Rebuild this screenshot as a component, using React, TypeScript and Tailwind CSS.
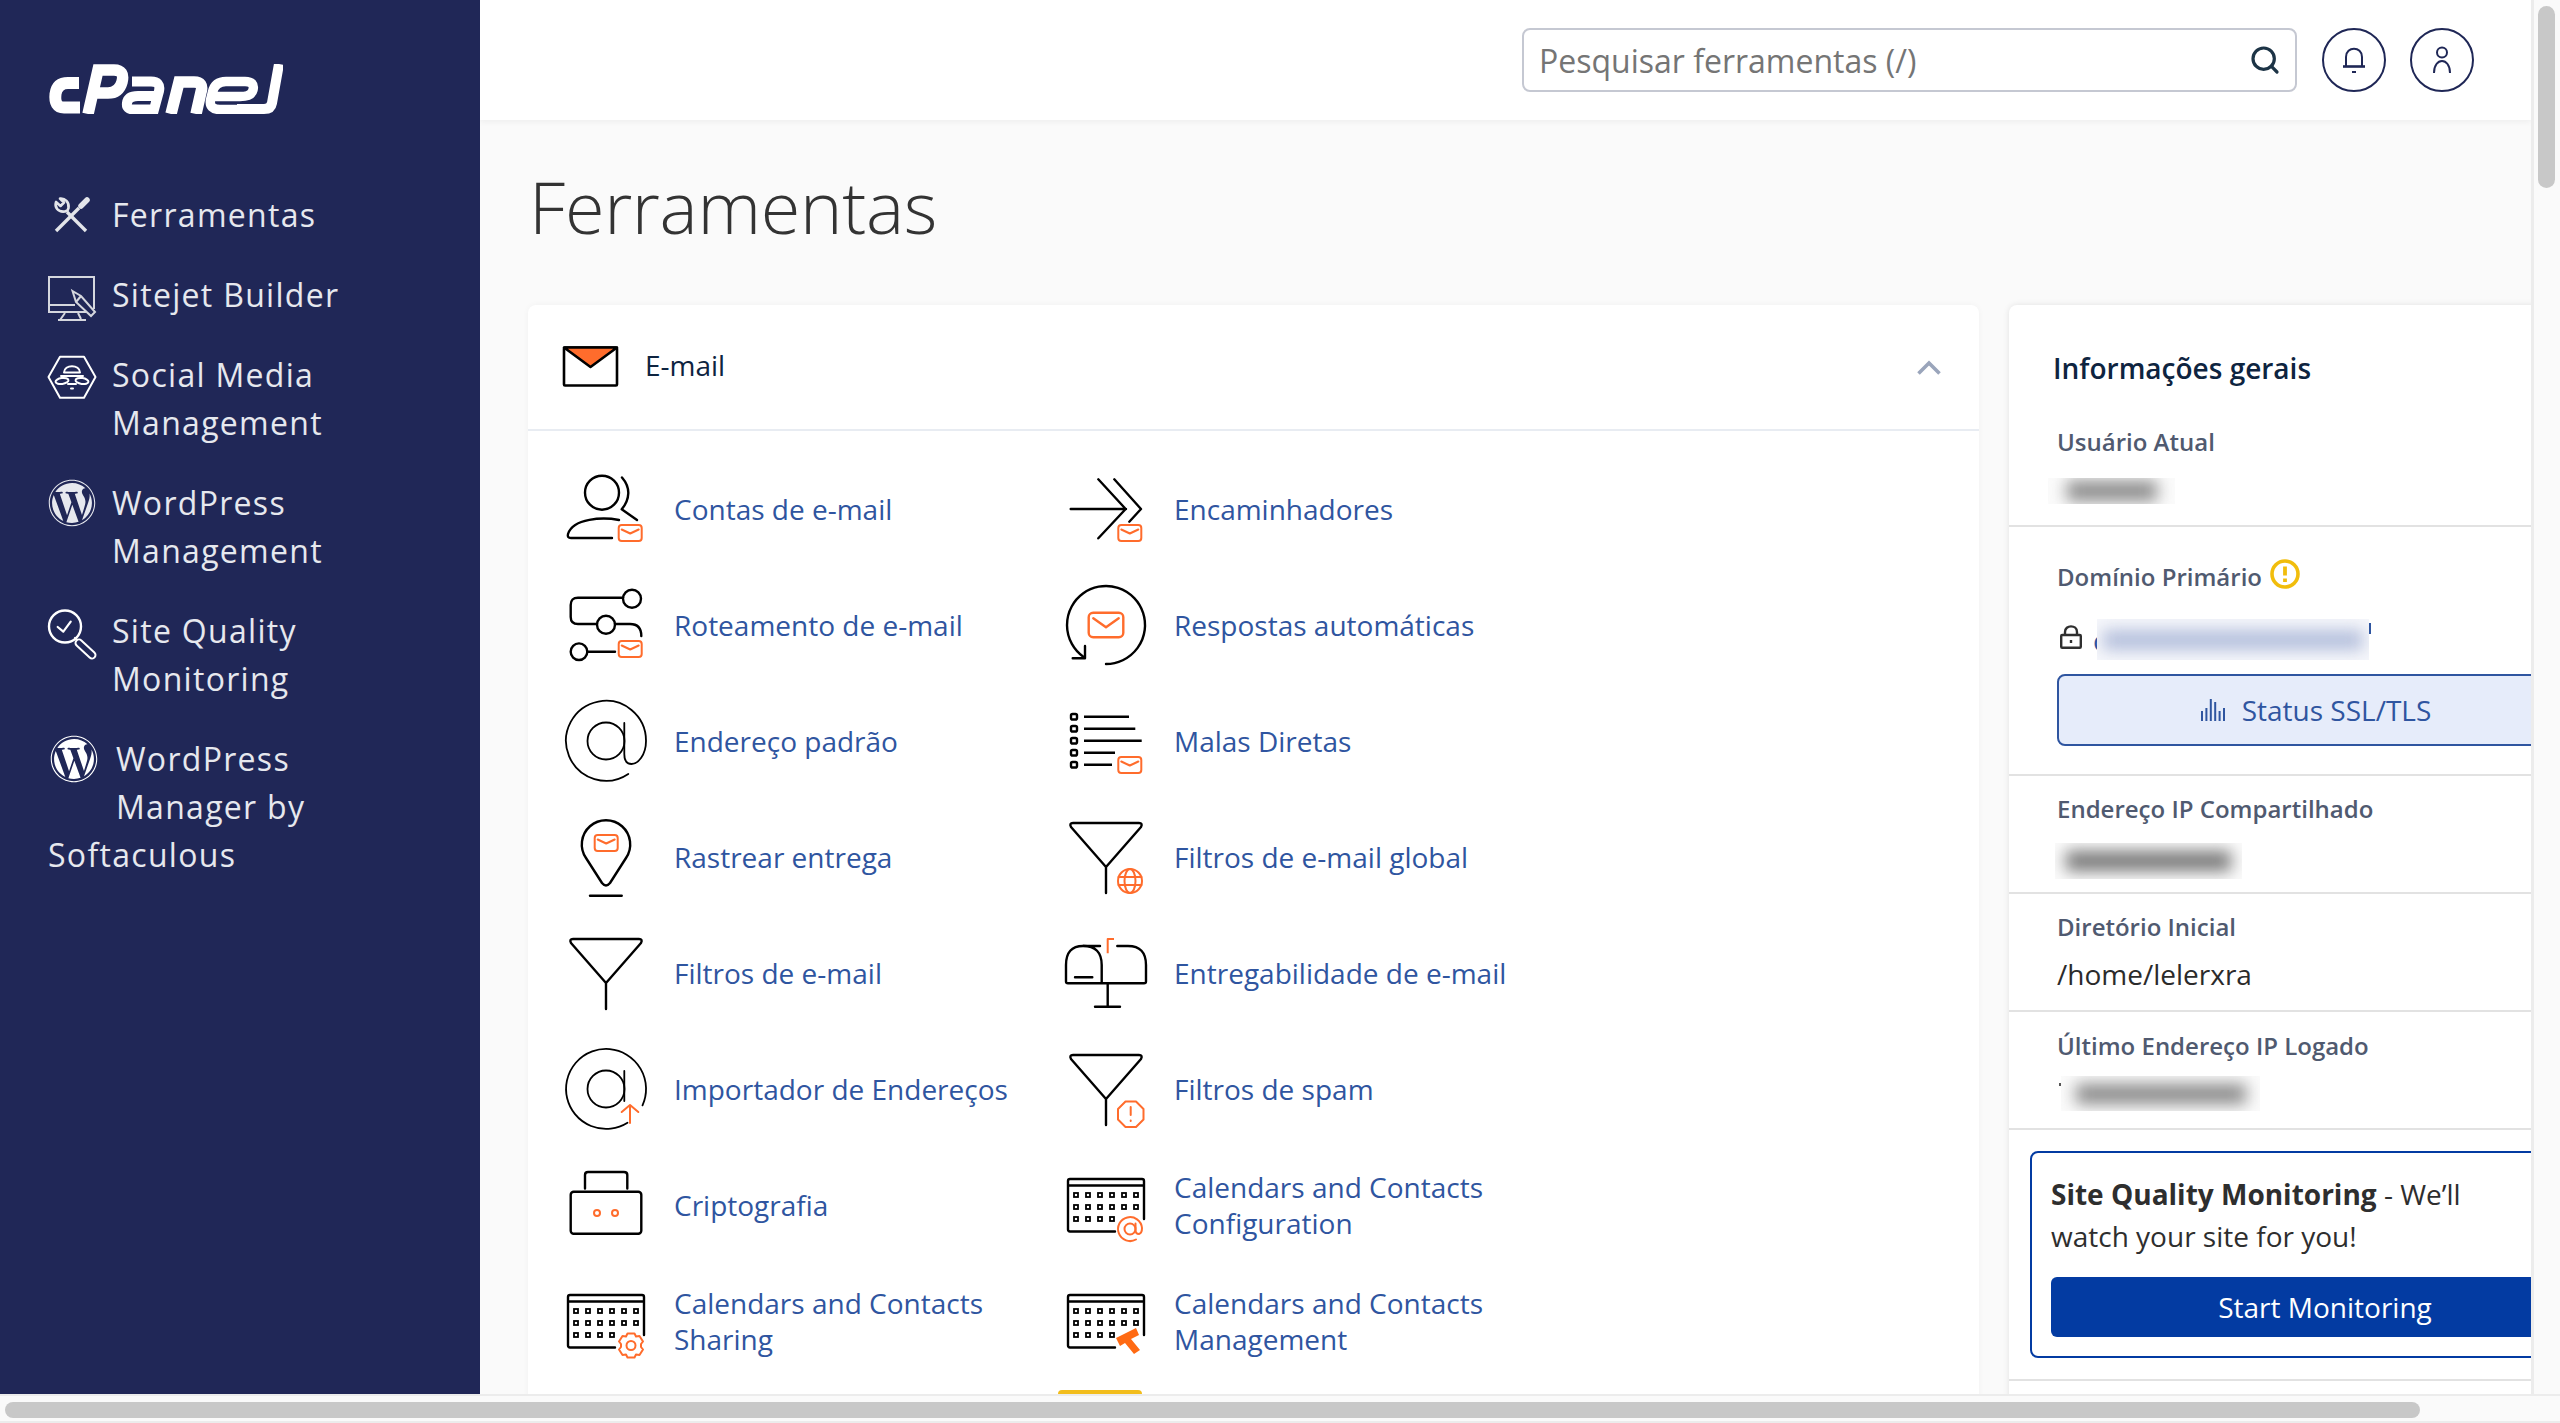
import React from "react";
import { Search } from "lucide-react";
import { FaWordpress } from "react-icons/fa";

const ORANGE = "#ff6c2c";

const Mail = ({ x, y }: { x: number; y: number }) => (
  <g fill="none" stroke={ORANGE} strokeWidth="2">
    <rect x={x} y={y} width="23" height="16" rx="3" />
    <path d={`M${x + 3} ${y + 4.5}L${x + 11.5} ${y + 8.5}L${x + 20} ${y + 4.5}`} />
  </g>
);

const Ic = ({ children }: { children: React.ReactNode }) => (
  <svg
    viewBox="0 0 76 76"
    className="w-[76px] h-[76px] shrink-0 overflow-visible"
    fill="none"
    stroke="#000"
    strokeWidth="2.4"
    strokeLinecap="round"
    strokeLinejoin="round"
  >
    {children}
  </svg>
);

const funnel = "M5 4H71Q75 4 73 8L38 48L3 8Q1 4 5 4ZM38 48V74";

const CalendarBody = () => {
  const dots: React.ReactNode[] = [];
  [28, 40, 52].forEach((y, r) =>
    [8, 20, 32, 44, 56, 68].forEach((x, c) => {
      if (r === 2 && c > 3) return;
      dots.push(<rect key={`${x}-${y}`} x={x - 2} y={y - 2} width="4" height="4" strokeWidth="1.8" strokeLinecap="butt" strokeLinejoin="miter" />);
    })
  );
  return (
    <>
      <path d="M47 64.5H2Q0 64.5 0 62.5V14Q0 12 2 12H74Q76 12 76 14V52M0 18.5H76" />
      {dots}
    </>
  );
};

const emailIcons: Record<string, React.ReactNode> = {
  contas: (
    <Ic>
      <circle cx="34" cy="21.7" r="17" />
      <path d="M54 6.5Q60.5 14 60.3 22.3Q60 31 53.7 38.3L69 49" />
      <path d="M51 49C35 46 5 47 0 63Q-1 67 3 67H44" />
      <Mail x={50.7} y={54} />
    </Ic>
  ),
  roteamento: (
    <Ic>
      <circle cx="64" cy="11.7" r="9" />
      <path d="M55 10.7H10Q2.7 10.7 2.7 18V30Q2.7 37 10 37H29" />
      <circle cx="38" cy="37.7" r="9" />
      <path d="M47 37H62Q73.3 37 73.3 49" />
      <circle cx="11" cy="64.7" r="8.3" />
      <path d="M19.3 64.7H47" />
      <Mail x={50.7} y={54} />
    </Ic>
  ),
  at: (
    <Ic>
      <g strokeWidth="1.8">
        <path d="M60.3 71A40 40 0 1 1 78 38C78 52 70 61 63.5 61C58 61 56.3 56 56.3 51V20" />
        <circle cx="38" cy="38" r="18.5" />
      </g>
    </Ic>
  ),
  rastrear: (
    <Ic>
      <path d="M34 64L18 39A24.2 24.2 0 1 1 58 39L42 64Q38 69 34 64Z" />
      <path d="M22 76.7H53.7" />
      <Mail x={26.7} y={16} />
    </Ic>
  ),
  filtro: (
    <Ic>
      <path d={funnel} />
    </Ic>
  ),
  importador: (
    <Ic>
      <g strokeWidth="1.8">
        <path d="M59.5 71.7A40 40 0 1 1 74.5 54.4" />
        <circle cx="38" cy="38" r="18.5" />
        <path d="M56.3 20V50" />
      </g>
      <path d="M62 72V54.5M53.7 61L62 54L70.3 61" stroke={ORANGE} strokeWidth="2" />
    </Ic>
  ),
  cripto: (
    <Ic>
      <rect x="2.7" y="24.7" width="70.6" height="42" rx="3" />
      <path d="M17 21.5V8Q17 5 20 5H56Q59.3 5 59.3 8V21.5" />
      <circle cx="29" cy="46" r="3" stroke={ORANGE} strokeWidth="2" />
      <circle cx="47" cy="46" r="3" stroke={ORANGE} strokeWidth="2" />
    </Ic>
  ),
  calSharing: (
    <Ic>
      <CalendarBody />
      <g stroke={ORANGE} strokeWidth="2">
        <circle cx="63" cy="62.5" r="4.5" />
        <path d="M59.5 50.5H66.5L68 53.5L71.5 53L75 58.5L73 61V64L75 66.5L71.5 72L68 71.5L66.5 74.5H59.5L58 71.5L54.5 72L51 66.5L53 64V61L51 58.5L54.5 53L58 53.5Z" />
      </g>
    </Ic>
  ),
  encaminhadores: (
    <Ic>
      <path d="M2.7 38H58M30.3 8.3L57.7 38L30.3 67.3M46.3 8.3L73 38L61.3 50.7" />
      <Mail x={50.3} y={54} />
    </Ic>
  ),
  respostas: (
    <Ic>
      <path d="M38 77A39 39 0 1 0 15.3 69.7" />
      <path d="M17 59V71.3H4.7" />
      <rect x="20.7" y="25.7" width="34.6" height="24.6" rx="4.5" stroke={ORANGE} strokeWidth="2.4" />
      <path d="M25.3 31.3L38 40.3L50.7 31.3" stroke={ORANGE} strokeWidth="2.4" />
    </Ic>
  ),
  malas: (
    <Ic>
      {[13.7, 25.7, 37.7, 49.7, 61.7].map((y) => (
        <rect key={y} x="3" y={y - 2.7} width="6" height="5.5" rx="1.6" />
      ))}
      <path d="M16 13.7H61M16 25.7H67.3M16 37.7H73.7M16 49.7H47M16 61.7H44" strokeLinecap="butt" />
      <Mail x={50.3} y={54} />
    </Ic>
  ),
  global: (
    <Ic>
      <path d={funnel} />
      <g stroke={ORANGE} strokeWidth="2">
        <circle cx="62" cy="62" r="12" />
        <ellipse cx="62" cy="62" rx="5.5" ry="12" />
        <path d="M50.5 58H73.5M50.5 66H73.5" />
      </g>
    </Ic>
  ),
  entrega: (
    <Ic>
      <path d="M33.7 48.3V30Q33.7 11 15 11Q-2 11 -2 30V46.5Q-2 48.3 0 48.3H76Q78 48.3 78 46.5V30Q78 11 60 11H49.3M15.3 11H32" />
      <path d="M7 42.3H24.3M39.7 49V71.7M27 71.7H52" />
      <path d="M39.7 18.3V4H46" stroke={ORANGE} strokeWidth="2" strokeLinecap="butt" />
    </Ic>
  ),
  spam: (
    <Ic>
      <path d={funnel} />
      <path d="M57.5 50.5H68L75.5 58V68.5L68 76H57.5L50 68.5V58Z" stroke={ORANGE} strokeWidth="2" />
      <path d="M62.7 56V64M62.7 69.5V70" stroke={ORANGE} strokeWidth="2" />
    </Ic>
  ),
  calConfig: (
    <Ic>
      <CalendarBody />
      <g stroke={ORANGE} strokeWidth="2">
        <circle cx="62" cy="62" r="5.5" />
        <path d="M67.5 56.5V63Q67.5 67 71 67Q74 66 74 61A12 12 0 1 0 68 72.5" />
      </g>
    </Ic>
  ),
  calMgmt: (
    <Ic>
      <CalendarBody />
      <path d="M48 55L68 45L71 52L63 56L72 67L66 71L57 60L52 63Z" fill="#ff6a13" stroke="none" />
    </Ic>
  ),
};

type Tool = { label: string; icon: string };

const tools: [Tool, Tool][] = [
  [{ label: "Contas de e-mail", icon: "contas" }, { label: "Encaminhadores", icon: "encaminhadores" }],
  [{ label: "Roteamento de e-mail", icon: "roteamento" }, { label: "Respostas automáticas", icon: "respostas" }],
  [{ label: "Endereço padrão", icon: "at" }, { label: "Malas Diretas", icon: "malas" }],
  [{ label: "Rastrear entrega", icon: "rastrear" }, { label: "Filtros de e-mail global", icon: "global" }],
  [{ label: "Filtros de e-mail", icon: "filtro" }, { label: "Entregabilidade de e-mail", icon: "entrega" }],
  [{ label: "Importador de Endereços", icon: "importador" }, { label: "Filtros de spam", icon: "spam" }],
  [{ label: "Criptografia", icon: "cripto" }, { label: "Calendars and Contacts Configuration", icon: "calConfig" }],
  [{ label: "Calendars and Contacts Sharing", icon: "calSharing" }, { label: "Calendars and Contacts Management", icon: "calMgmt" }],
];

const ToolItem = ({ tool }: { tool: Tool }) => (
  <a className="flex items-center gap-[30px] h-[116px] text-[#2f55a0] text-[28px] leading-[36px]">
    {emailIcons[tool.icon]}
    <span className="max-w-[340px]">{tool.label}</span>
  </a>
);

const CPanelLogo = () => (
  <svg viewBox="0 0 235 50" className="w-[235px] h-[50px] block" fill="none" stroke="#fff" strokeWidth="11.5" aria-label="cPanel">
    <path d="M31 19H20Q9 19 7.5 30Q6 43.5 16 43.5H32" strokeWidth="12" />
    <path d="M40 50L50 6H66Q77 6 74 18Q71 29 60 29H46" />
    <path d="M84 17.5H103Q113 17.5 111 27L106 45.5H86Q78 45.5 79 39Q80 32 90 32H108" strokeWidth="10" />
    <path d="M123 50L131 18H146Q156 18 153 28L148 50" />
    <path d="M190 45.5H172Q161 45.5 162.5 36L164.5 28Q167 17.5 178 17.5H197Q207 17.5 205 26Q203.5 32.5 192 32.5H166" strokeWidth="9.5" />
    <path d="M231 0L224 39Q223 45 216 45H189" strokeWidth="10" />
  </svg>
);

const NavSvg = ({ children }: { children: React.ReactNode }) => (
  <svg
    viewBox="0 0 48 48"
    className="w-[48px] h-[48px] shrink-0 overflow-visible"
    fill="none"
    stroke="#e3e5ea"
    strokeWidth="2"
    strokeLinecap="round"
    strokeLinejoin="round"
  >
    {children}
  </svg>
);

const ToolsIcon = () => (
  <NavSvg>
    <path d="M38 40L19 21" strokeWidth="3.4" strokeLinecap="butt" />
    <path d="M12 7.5L16 11.5L12.5 15L8 11C6.5 16 9.5 21.5 17 20.5L19.5 19.5L20.5 17C21.5 11 17 7 12 7.5Z" strokeWidth="2.6" />
    <path d="M8 40L31 17" strokeWidth="3.4" strokeLinecap="butt" />
    <path d="M33 15L39 9" strokeWidth="5.5" />
  </NavSvg>
);

const SitejetIcon = () => (
  <NavSvg>
    <g strokeLinecap="butt" strokeLinejoin="miter" stroke="#d5d7de">
      <path d="M38 41H1V6H46V38M1 34H27" />
      <path d="M17 42L12 49M30 42L33 48M10 49H38" />
      <path d="M24.5 20L33 25L47 41L43 45L28 31Z" />
      <path d="M28 31L33 25" />
    </g>
  </NavSvg>
);

const SocialIcon = () => (
  <NavSvg>
    <g stroke="#fff">
      <path d="M0.5 26L12 5.7H36L47.5 26L36 46.7H12Z" />
      <path d="M16 21.5C16 13 32 13 32 21.5ZM13 25H35" />
      <ellipse cx="14" cy="30" rx="6.5" ry="3" transform="rotate(-8 14 30)" />
      <ellipse cx="34" cy="30" rx="6.5" ry="3" transform="rotate(8 34 30)" />
      <path d="M20 33H28M23 37.5H25" />
    </g>
  </NavSvg>
);

const QualityIcon = () => (
  <NavSvg>
    <g stroke="#fff">
      <circle cx="17" cy="19.5" r="16" strokeWidth="2.4" />
      <path d="M9.7 20L15.3 24.7L22.7 14.7" strokeWidth="2.2" />
      <path d="M27 31L31 35" strokeWidth="2.2" />
      <path d="M31 36L44 48" strokeWidth="9" />
      <path d="M31 36L44 48" stroke="#202757" strokeWidth="5" />
    </g>
  </NavSvg>
);

const NavRow = ({ icon, children }: { icon: React.ReactNode; children: React.ReactNode }) => (
  <div className="flex gap-[16px]">
    <div className="h-[48px] flex items-center shrink-0">{icon}</div>
    <span>{children}</span>
  </div>
);

const Sidebar = () => (
  <aside className="w-[480px] shrink-0 bg-[#202757] text-[#e6e8ee] text-[32px] leading-[48px] tracking-[1.3px] pl-[48px] pr-[20px] pt-[64px]">
    <CPanelLogo />
    <nav className="mt-[77px] flex flex-col gap-[32px]">
      <NavRow icon={<ToolsIcon />}>Ferramentas</NavRow>
      <NavRow icon={<SitejetIcon />}>Sitejet Builder</NavRow>
      <NavRow icon={<SocialIcon />}>Social Media<br />Management</NavRow>
      <NavRow icon={<FaWordpress size={48} className="text-[#e6e8ee]" />}>WordPress<br />Management</NavRow>
      <NavRow icon={<QualityIcon />}>Site Quality<br />Monitoring</NavRow>
      <div>
        <FaWordpress size={48} className="float-left text-white ml-[2px] mr-[18px] mb-[48px] mt-[0px]" />
        WordPress<br />Manager by<br />Softaculous
      </div>
    </nav>
  </aside>
);

const TopBar = () => (
  <header className="h-[120px] shrink-0 bg-white shadow-[0_2px_6px_rgba(0,0,0,0.05)] flex items-center justify-end pr-[57px] relative z-10">
    <div className="w-[775px] h-[64px] border-2 border-[#c5c8d2] rounded-[8px] flex items-center pl-[15px] pr-[14px]">
      <input
        placeholder="Pesquisar ferramentas (/)"
        className="flex-1 min-w-0 outline-none text-[32px] mt-[2px] placeholder:text-[#757575]"
      />
      <Search size={32} strokeWidth={2.4} className="text-[#1d3446]" />
    </div>
    <button className="ml-[25px] w-[64px] h-[64px] rounded-full border-2 border-[#1f2756] flex items-center justify-center">
      <svg viewBox="0 0 24 28" className="w-[24px] h-[28px]" fill="none" stroke="#1f2756" strokeWidth="2">
        <path d="M4 20V11C4 0 20 0 20 11V20" />
        <path d="M1 20.5H23" strokeWidth="2.6" />
        <path d="M10 26H14" />
      </svg>
    </button>
    <button className="ml-[24px] w-[64px] h-[64px] rounded-full border-2 border-[#1f2756] flex items-center justify-center">
      <svg viewBox="0 0 20 28" className="w-[20px] h-[28px]" fill="none" stroke="#1f2756" strokeWidth="2">
        <circle cx="10" cy="6.5" r="5" />
        <path d="M2 27C2 11 18 11 18 27" />
      </svg>
    </button>
  </header>
);

const EmailCard = () => (
  <section className="w-[1451px] shrink-0 bg-white rounded-t-[8px] shadow-[0_0_6px_rgba(0,0,0,0.04)]">
    <div className="h-[126px] border-b-2 border-[#e8ecf2] flex items-center pl-[34px] pr-[38px]">
      <svg viewBox="0 0 56 42" className="w-[57px] h-[42px] shrink-0" stroke="#000" strokeWidth="2.6" strokeLinejoin="round">
        <rect x="1.5" y="1.5" width="53" height="38" rx="1" fill="#fff" />
        <path d="M1.5 1.5H54.5L28 21Z" fill={ORANGE} />
      </svg>
      <span className="ml-[26px] text-[28px] text-[#0e2440] flex-1 -mt-[4px]">E-mail</span>
      <svg viewBox="0 0 24 15" className="w-[24px] h-[15px]" fill="none" stroke="#9aa5bb" strokeWidth="3.6">
        <path d="M1.5 13.5L12 3L22.5 13.5" />
      </svg>
    </div>
    <div className="pt-[20px] pl-[40px] grid grid-cols-[500px_500px]">
      {tools.map(([a, b]) => (
        <React.Fragment key={a.label}>
          <ToolItem tool={a} />
          <ToolItem tool={b} />
        </React.Fragment>
      ))}
      <div />
      <div className="h-[60px] w-[84px] mt-[11px] -ml-[10px] rounded-t-[4px] bg-[#f2bd1c]" />
    </div>
  </section>
);

const Redacted = ({ w, h, bar, className }: { w: string; h: string; bar: string; className?: string }) => (
  <div className={`${w} ${h} ${className ?? "bg-[#fbfbfb]"} overflow-hidden flex items-center justify-center`}>
    <div className={`${bar} h-[20px] blur-[8px]`} />
  </div>
);

const Label = ({ children }: { children: React.ReactNode }) => (
  <div className="text-[24px] leading-[32px] font-semibold text-[#505a70]">{children}</div>
);

const InfoCard = () => (
  <aside className="w-[632px] shrink-0 bg-white rounded-t-[8px] shadow-[0_0_6px_rgba(0,0,0,0.1)]">
    <div className="pl-[48px] pt-[45px] pb-[21px] border-b-2 border-[#e2e2e2]">
      <h2 className="-ml-[4px] text-[28px] leading-[36px] font-semibold text-[#0e2440]">Informações gerais</h2>
      <div className="mt-[40px]">
        <Label>Usuário Atual</Label>
      </div>
      <div className="mt-[20px] -ml-[9px]">
        <Redacted w="w-[127px]" h="h-[26px]" bar="w-[90px] bg-[#8a8a8a]" />
      </div>
    </div>
    <div className="pl-[48px] pr-[66px] pt-[34px] pb-[28px] border-b-2 border-[#e2e2e2]">
      <div className="flex items-center gap-[8px]">
        <Label>Domínio Primário</Label>
        <svg viewBox="0 0 30 30" className="w-[30px] h-[30px] -mt-[6px]" fill="none" stroke="#f1bd0c">
          <circle cx="15" cy="15" r="13" strokeWidth="3.6" />
          <path d="M15 7.5V16.5" strokeWidth="3.8" />
          <path d="M15 19.5V23" strokeWidth="3.8" />
        </svg>
      </div>
      <div className="mt-[26px] h-[41px] flex items-center">
        <svg viewBox="0 0 22 24" className="w-[22px] h-[24px] ml-[3px] -mt-[6px] shrink-0" fill="none" stroke="#2f2f2f" strokeWidth="2.4">
          <rect x="1.2" y="10" width="19.6" height="12.8" rx="1" />
          <path d="M5 10V7C5 -0.5 17 -0.5 17 7V10" />
          <path d="M11 15V18" />
        </svg>
        <span className="ml-[11px] text-[28px] text-[#2f55a0]">c</span>
        <Redacted w="w-[272px]" h="h-[41px]" bar="w-[260px] bg-[#b4bfdc]" className="bg-[#f6f7fb] -ml-[9px] relative" />
        <div className="w-[2px] h-[11px] bg-[#2f55a0] self-start mt-[4px]" />
      </div>
      <a className="mt-[14px] h-[72px] border-2 border-[#2f55a0] rounded-[8px] bg-[#e6ecfa] text-[#2f55a0] text-[28px] flex items-center justify-center gap-[17px]">
        <svg viewBox="0 0 24 22" className="w-[24px] h-[22px]" fill="#2f55a0">
          <rect x="0" y="12" width="2" height="10" />
          <rect x="4.4" y="9" width="2" height="13" />
          <rect x="8.8" y="0" width="2" height="22" />
          <rect x="13.2" y="3" width="2" height="19" />
          <rect x="17.6" y="12" width="2" height="10" />
          <rect x="22" y="9" width="2" height="13" />
        </svg>
        Status SSL/TLS
      </a>
    </div>
    <div className="pl-[48px] pt-[17px] pb-[13px] border-b-2 border-[#e2e2e2]">
      <Label>Endereço IP Compartilhado</Label>
      <div className="mt-[18px] -ml-[2px]">
        <Redacted w="w-[187px]" h="h-[36px]" bar="w-[165px] bg-[#777]" />
      </div>
    </div>
    <div className="pl-[48px] pt-[17px] pb-[18px] border-b-2 border-[#e2e2e2]">
      <Label>Diretório Inicial</Label>
      <div className="mt-[13px] text-[28px] leading-[36px] text-[#2b2b2b]">/home/lelerxra</div>
    </div>
    <div className="pl-[48px] pt-[18px] pb-[17px] border-b-2 border-[#e2e2e2]">
      <Label>Último Endereço IP Logado</Label>
      <div className="mt-[14px] flex items-start">
        <div className="w-[3px] h-[3px] mt-[7px] ml-[2px] -mr-[1px] bg-[#555]" />
        <Redacted w="w-[199px]" h="h-[35px]" bar="w-[170px] bg-[#8a8a8a]" />
      </div>
    </div>
    <div className="px-[21px] py-[21px] border-b-2 border-[#e2e2e2]">
      <div className="border-2 border-[#033ba2] rounded-[8px] pt-[20px] pb-[19px] px-[19px] text-[28px] leading-[42px] text-[#2e2e2e]">
        <p>
          <b className="font-bold">Site Quality Monitoring</b> - We’ll
          <br />
          watch your site for you!
        </p>
        <button className="mt-[20px] w-full h-[60px] bg-[#033ba2] rounded-[6px] text-white text-[28px]">Start Monitoring</button>
      </div>
    </div>
  </aside>
);

export default function App() {
  return (
    <div className="w-[2560px] h-[1423px] overflow-hidden flex flex-col bg-[#fafafa] font-['Open_Sans',sans-serif]">
      <div className="h-[1394px] flex shrink-0">
        <div className="w-[2531px] shrink-0 flex overflow-hidden">
          <Sidebar />
          <main className="flex-1 min-w-0 flex flex-col overflow-hidden">
            <TopBar />
            <div className="pl-[48px]">
              <h1 className="mt-[36px] ml-[1px] text-[72px] leading-[100px] font-light tracking-[-0.3px] text-[#333]">Ferramentas</h1>
              <div className="mt-[49px] flex gap-[30px]">
                <EmailCard />
                <InfoCard />
              </div>
            </div>
          </main>
        </div>
        <div className="flex-1 border-l-[3px] border-[#ececec] pl-[4px] pt-[6px]">
          <div className="w-[17px] h-[182px] rounded-full bg-[#c8c8c8]" />
        </div>
      </div>
      <div className="flex-1 border-t-[2px] border-b-[2px] border-[#ececec] pl-[5px] pt-[6px]">
        <div className="w-[2415px] h-[16px] rounded-full bg-[#c8c8c8]" />
      </div>
    </div>
  );
}
